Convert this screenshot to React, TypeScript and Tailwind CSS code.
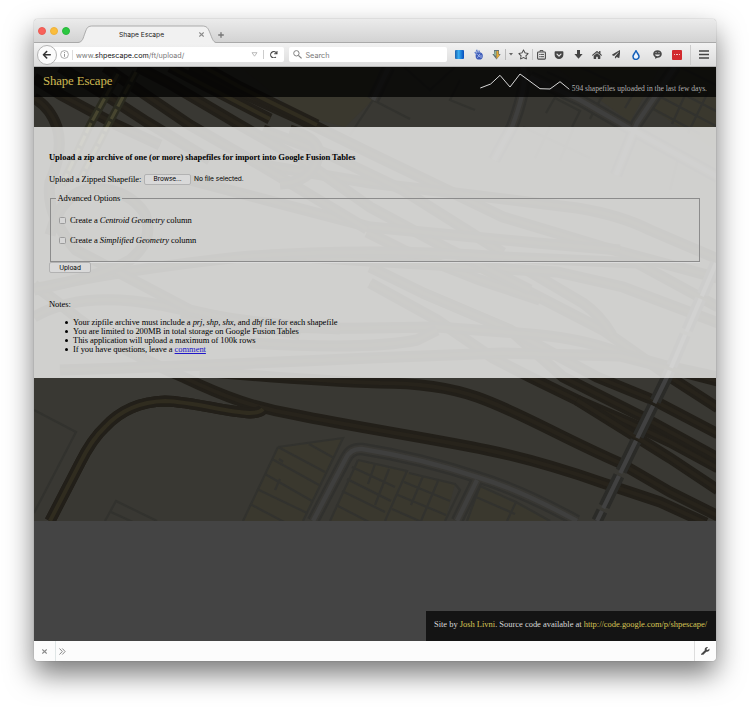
import React from "react";
import { FaHome, FaWrench, FaGetPocket, FaRegStar, FaPaperPlane, FaArrowLeft, FaRedo } from "react-icons/fa";
import { Plus } from "lucide-react";

const RAILS = [
  "M50 521 L80 463 Q92 439 105 427 Q128 402 165 401 C195 402 225 412 250 413 Q260 413 263 409",
  "M34 285 Q55 300 80 320 Q120 350 185 378 C225 397 255 408 297 415 C350 426 440 440 487 450 C540 461 580 475 603 483 L660 502 L706 523",
  "M200 371 Q313 381 380 383 Q437 383 477 397 C520 412 560 437 620 463 L670 492 L718 516",
  "M370 283 L437 320 L493 358 L530 377 L577 400 L630 423 L670 442 L718 468",
  "M577 400 L630 433 L670 458 L718 490",
  "M370 267 L423 293 L510 330 L563 377 L643 417 L718 458",
  "M423 293 L510 330 L597 377 L653 400 L718 434",
  "M477 265 L603 330 L670 377 L718 408",
  "M527 270 L583 303 Q600 315 612 335",
  "M180 320 Q280 330 370 328 L437 327 L517 333 Q580 337 620 353 L663 365 L718 377",
  "M60 370 Q220 365 370 358 L503 353 L620 356 L718 381",
  "M250 343 Q370 350 417 340 L437 330",
  "M367 232 L403 250 L480 280 L540 300",
  "M270 255 L403 263 L557 272 L623 287 L718 323",
  "M503 257 L637 263 L718 307",
  "M190 67 L240 92 L317 127 L370 153 L447 190 L503 217 L603 247 L718 278",
  "M263 165 L370 183 L447 192 L577 208 Q620 215 650 230 L718 259",
  "M138 67 L167 82 L240 125 L310 165 L370 207 L450 250 L530 290",
  "M263 130 L330 155 L403 190 L503 253",
  "M190 180 L370 227 L537 243 L620 250",
  "M34 289 Q120 270 240 257 Q370 247 503 257",
  "M34 317 Q80 290 160 305 Q250 325 340 329",
  "M34 98 Q50 107 57 127 Q64 150 50 182 Q45 215 76 250 L190 310 L300 335",
  "M105 67 L131 85 L190 125 L260 165 L367 229",
  "M60 67 L110 98 L147 122 L210 160",
  "M34 78 L61 95 L117 125 L160 145",
  "M50 235 Q62 190 95 188 Q130 190 145 214 Q155 240 130 260 Q105 275 34 290",
  "M290 130 Q325 140 317 160 Q310 182 280 184",
];

const GILDED = ["M204 67 L240 87 L317 125", "M170 67 L204 85 L270 119", "M50 521 L80 463 Q92 439 105 427 Q128 402 165 401 C195 402 225 412 250 413 Q260 413 263 409"];
const DASHED = ["M118 74 L90 125 L62 185", "M136 72 L106 129 L80 180"];
const BRIDGE = "M716 263 L667 377 L597 521";
const STREETS = [
  "M313 521 L346 458 Q351 448 362 449 Q420 458 480 478 Q520 490 577 521",
  "M477 480 L457 521",
  "M523 67 Q528 85 512 127 L494 160",
  "M530 77 L580 100 L627 127 L718 177",
  "M675 67 L637 123 L616 175",
  "M389 67 L373 100",
];
const PARCELS = [
  "M34 410 L76 432 L34 513",
  "M105 521 L116 501 L157 521 M111 512 L135 523",
  "M278 447 L343 438 L303 521 M278 447 L243 521",
  "M278 447 L325 472 M309 444 L334 458 M272 459 L319 485 M265 474 L312 501 M257 489 L307 513 M250 504 L286 523 M279 459 L283 462 M280 479 L275 490",
  "M358 460 L407 471 L385 521 M358 460 L330 521 M352 467 L395 487 M347 479 L391 501 M342 491 L385 512 M336 505 L369 522 M375 464 L368 484 M389 469 L375 505",
  "M409 473 L455 484 L460 490 L445 521 M404 482 L450 501 M398 495 L446 515 M392 509 L424 523 M423 476 L411 505 M438 481 L421 521",
  "M480 486 L516 502 L550 521 M480 486 L467 521 M476 497 L515 514 M516 502 L507 521",
  "M547 72 L565 80 L546 113 M565 80 L603 98 M555 98 L580 111 L572 127 M580 67 L610 81 L590 119 M610 81 L635 91 L625 108",
  "M660 82 L718 112 M653 93 L718 127 M646 105 L700 134 M680 67 L718 86 M690 84 L672 124 M708 92 L688 133",
  "M404 67 L430 90 L455 67 M460 80 L450 100 L475 110 M373 100 L410 119 M373 100 L350 135",
  "M523 127 L590 158 M550 127 L535 158 M574 127 L560 160 M650 145 L700 170 M680 150 L670 190",
];

function StreetMap() {
  return (
    <svg className="absolute left-0 top-0 h-[454px] w-[682px]" viewBox="34 67 682 454" fill="none">
      <rect x="34" y="67" width="682" height="454" fill="#393833" />
      <path d="M278 447 L343 438 L303 521 L243 521Z M358 460 L455 484 L445 521 L330 521Z M480 486 L550 521 L467 521Z M555 67 L660 67 L630 122Z M680 67 L716 67 L716 150 L645 105Z M373 100 L345 127 L300 115 L240 67 L380 67Z" fill="#3a382e" />
      {PARCELS.map((d) => <path key={d} d={d} stroke="#32322e" strokeWidth="2.2" />)}
      {STREETS.map((d) => <path key={d} d={d} stroke="#31312e" strokeWidth="12.5" />)}
      {STREETS.map((d) => <path key={d} d={d} stroke="#383733" strokeWidth="8" />)}
      {STREETS.map((d) => <path key={d} d={d} stroke="#3f3f3e" strokeWidth="4.5" />)}
      {RAILS.map((d) => (
        <g key={d}>
          <path d={d} stroke="#221f19" strokeWidth="11" />
          <path d={d} stroke="#27231b" strokeWidth="4" />
        </g>
      ))}
      {GILDED.map((d) => (
        <g key={d}>
          <path d={d} stroke="#221f19" strokeWidth="11" />
          <path d={d} stroke="#302c1f" strokeWidth="4" />
        </g>
      ))}
      {DASHED.map((d) => <path key={d} d={d} stroke="#2b2b20" strokeWidth="8" />)}
      {DASHED.map((d) => <path key={d} d={d} stroke="#47452f" strokeWidth="3.2" strokeDasharray="11 3" />)}
      <path d={BRIDGE} stroke="#2b2b28" strokeWidth="11.5" strokeDasharray="34 5" />
      <path d={BRIDGE} stroke="#414141" strokeWidth="4.3" strokeDasharray="36 3" />
    </svg>
  );
}

function Slot({ className, children }: { className: string; children?: React.ReactNode }) {
  return <div className={"flex h-full shrink-0 items-center justify-center text-[#454545] " + className}>{children}</div>;
}

function CloseMark() {
  return <svg width="5" height="5" viewBox="0 0 5 5" stroke="#8a8a8a" strokeWidth="1.1"><path d="M.3 .5 4.7 4.5M4.7 .5 .3 4.5" /></svg>;
}

function TabStrip() {
  return (
    <div className="flex h-6 shrink-0 rounded-t-[4px] border-b border-[#a9a9a9] bg-linear-to-b from-[#ebebeb] to-[#d3d3d3]">
      <div className="flex w-[44px] gap-[4px] pl-[4px] pt-[8px]">
        <i className="size-[8px] rounded-full border border-[#ea5b53] bg-[#f9615a]" />
        <i className="size-[8px] rounded-full border border-[#eeb23c] bg-[#fbbd3c]" />
        <i className="size-[8px] rounded-full border border-[#29b83c] bg-[#2bc840]" />
      </div>
      <div className="relative h-[24px] w-[138px]">
        <svg className="absolute inset-0" width="138" height="24" viewBox="0 0 138 24">
          <path d="M0 23.5 C5 23 5 19 7 14 C9 8 10 7 15 7 H124 C129 7 130 9 132 14 C134 19 135 23 138 23.5 V24 H0Z" fill="#f1f1f1" />
          <path d="M0 23.5 C5 23 5 19 7 14 C9 8 10 7 15 7 H124 C129 7 130 9 132 14 C134 19 135 23 138 23.5" fill="none" stroke="#9c9c9c" strokeWidth=".8" />
        </svg>
        <div className="relative flex h-full items-center pl-[41px] pt-[8px]">
          <span className="w-[80px] whitespace-nowrap font-['Inter',sans-serif] text-[6.7px] leading-[8px] text-[#222]">Shape Escape</span>
          <span className="pb-[2px]"><CloseMark /></span>
        </div>
      </div>
      <div className="pl-[1px] pt-[12px]"><Plus size={8} strokeWidth={4} color="#777" /></div>
    </div>
  );
}

function NavBar() {
  return (
    <div className="flex h-6 shrink-0 items-center border-b border-[#b5b5b5] bg-linear-to-b from-[#f2f2f2] to-[#dcdcdc] font-['Inter',sans-serif]">
      <div className="z-10 ml-[3px] flex size-[20px] items-center justify-center rounded-full border border-[#b3b3b3] bg-[#fbfbfb] text-[#333]">
        <FaArrowLeft size={9.5} />
      </div>
      <div className="-ml-[4px] flex h-[15px] w-[232px] items-center rounded-r-[2px] bg-white pl-[7px]">
        <svg width="9" height="9" viewBox="0 0 9 9" fill="none" stroke="#888" strokeWidth=".7"><circle cx="4.5" cy="4.5" r="3.9" /><path d="M4.5 3.8V6.8M4.5 2.1V3" strokeWidth=".9" /></svg>
        <i className="ml-[3px] mr-[3px] h-[10px] w-px bg-[#ddd]" />
        <span className="grow whitespace-nowrap pt-[1px] text-[7.15px] leading-[9px] text-[#777]">www.<span className="text-[#111]">shpescape.com</span>/ft/upload/</span>
        <svg width="7" height="5" viewBox="0 0 7 5" fill="none" stroke="#aaa" strokeWidth=".8"><path d="M1 .7H6L3.5 4.2Z" /></svg>
        <i className="ml-[5px] mr-[6px] h-[9px] w-px bg-[#ccc]" />
        <FaRedo size={7.5} color="#444" className="mr-[6.5px]" />
      </div>
      <div className="ml-[5px] mr-[3px] flex h-[15px] w-[158px] items-center gap-[3px] rounded-[2px] bg-white pl-[4px] text-[7.3px] leading-[9px] text-[#777]">
        <svg width="9" height="9" viewBox="0 0 9 9" fill="none" stroke="#808080"><circle cx="3.4" cy="3.3" r="2.7" strokeWidth="1" /><path d="M5.4 5.4 8.6 8.4" strokeWidth="1.3" /></svg>
        <span className="pt-[1px]">Search</span>
      </div>
      <Slot className="w-[19px]"><i className="h-[9px] w-[9px] rounded-[1px] bg-linear-to-r from-[#1b5fae] via-[#39adf1] via-40% to-[#0b4bbb]" /></Slot>
      <Slot className="w-[19px]">
        <svg width="10" height="11" viewBox="0 0 10 11" fill="none">
          <circle cx="5.2" cy="6.9" r="3.6" fill="#3d5bb8" /><path d="M2.5 .8 3.6 4M.8 3 3 5.4M5 1.5 5.4 4" stroke="#6480cb" strokeWidth="1.5" />
          <path d="M3.4 5.2 6 8M6 4.8 3.4 8.8M7 6V9" stroke="#b9c9f4" strokeWidth=".8" />
        </svg>
      </Slot>
      <Slot className="w-[17px]">
        <svg width="9" height="11" viewBox="0 0 9 11"><path d="M2 1H7V5H8.7L4.5 10.5.3 5H2Z" fill="#607075" /><path d="M4.5 2V10L8 6 6.4 5.6V2Z" fill="#e5aa34" /><path d="M2.8 2H4V7L2 5.7Z" fill="#8fb59a" /></svg>
      </Slot>
      <i className="h-[11px] w-px bg-[#bbb]" />
      <Slot className="w-[9px]"><svg width="4" height="3" viewBox="0 0 4 3"><path d="M0 0H4L2 2.6Z" fill="#666" /></svg></Slot>
      <Slot className="w-[17px]"><FaRegStar size={11} /></Slot>
      <i className="h-[11px] w-px bg-[#c5c5c5]" />
      <Slot className="w-[16px]">
        <svg width="9" height="10" viewBox="0 0 9 10" fill="none" stroke="#4a4a4a"><rect x=".6" y="2" width="7.8" height="7.1" rx=".8" strokeWidth="1.1" /><path d="M3 1.8V.6H6V1.8" strokeWidth="1" /><path d="M2 4.4H7M2 6.7H7" strokeWidth="1" /><path d="M3.1 3V8" stroke="#eee" strokeWidth=".5" /></svg>
      </Slot>
      <Slot className="w-[20px]"><FaGetPocket size={10} /></Slot>
      <Slot className="w-[18px]"><svg width="9" height="9" viewBox="0 0 9 9" fill="#454545"><path d="M3 0H6V4H8.6L4.5 8.7.4 4H3Z" /></svg></Slot>
      <Slot className="w-[20px]"><FaHome size={10} /></Slot>
      <Slot className="w-[18px]"><FaPaperPlane size={8.5} /></Slot>
      <Slot className="w-[22px]"><svg width="8" height="10" viewBox="0 0 8 10"><path d="M4 .8C5 3 7 4.6 7 6.4A3 3 0 0 1 1 6.4C1 4.6 3 3 4 .8Z" fill="#eef6ff" stroke="#1560b9" strokeWidth="1.5" /></svg></Slot>
      <Slot className="w-[21px]">
        <svg width="9" height="9" viewBox="0 0 9 9"><path d="M4.5.3C7 .3 8.8 2 8.8 4.1S7 7.8 4.6 7.8L2 8.8 2.2 7.2C1 6.6.2 5.4.2 4.1.2 2 2 .3 4.5.3Z" fill="#484848" /><path d="M2.6 2.6H3.5M5.5 2.6H6.4" stroke="#eee" strokeWidth=".9" /><path d="M1.9 4.5H7.1C6.4 6.8 2.6 6.8 1.9 4.5Z" fill="#e6e6e6" /></svg>
      </Slot>
      <Slot className="w-[18px]"><i className="flex size-[10px] items-center justify-center gap-[1px] rounded-[1px] bg-[#d2292d]"><b className="size-[1.5px] bg-[#f3c5c6]" /><b className="size-[1.5px] bg-[#f3c5c6]" /><b className="size-[1.5px] bg-[#f3c5c6]" /></i></Slot>
      <i className="ml-[4px] h-[20px] w-px bg-[#ccc]" />
      <Slot className="w-[25px]"><svg width="10" height="9" viewBox="0 0 10 9" stroke="#444" strokeWidth="1.4"><path d="M0 1H10M0 4.5H10M0 8H10" /></svg></Slot>
    </div>
  );
}

function MacButton({ children, className }: { children: React.ReactNode; className: string }) {
  return <button className={"flex h-[11px] items-center justify-center rounded-[2px] border border-[#b2b2b2] bg-[#d9d9d9] font-['Inter',sans-serif] text-[6.5px] leading-[8px] text-black " + className}>{children}</button>;
}

function Option({ kind }: { kind: string }) {
  return (
    <label className="flex h-[20px] items-center whitespace-nowrap">
      <i className="mr-[4px] size-[7px] rounded-[1.5px] border border-[#9c9c9c] bg-[#d6d6d6]" />
      <span>Create a <em>{kind}</em> column</span>
    </label>
  );
}

function UploadForm() {
  return (
    <main className="h-[251px] bg-[#f6f6f5]/80 pl-[15px] pr-[16px] pt-[25px] text-black">
      <h1 className="h-[11px] whitespace-nowrap text-[8.55px] font-bold leading-[11px] tracking-[-0.049px]">Upload a zip archive of one (or more) shapefiles for import into Google Fusion Tables</h1>
      <div className="mt-[10px] flex h-[12px] items-center whitespace-nowrap">
        <span className="w-[95px]">Upload a Zipped Shapefile:</span>
        <MacButton className="w-[47px]">Browse...</MacButton>
        <span className="ml-[3px] pt-[1px] font-['Inter',sans-serif] text-[6.6px]">No file selected.</span>
      </div>
      <div className="mt-[7px] flex h-[12px] items-center">
        <i className="ml-[1px] mr-[1.5px] mt-[1px] h-[6px] w-[6px] self-end border-l border-t border-[#8c8c8c]" />
        <span className="whitespace-nowrap">Advanced Options</span>
        <i className="ml-[1.5px] mt-[1px] h-[6px] grow self-end border-r border-t border-[#8c8c8c]" />
      </div>
      <div className="ml-[1px] h-[58px] border-x border-b border-[#8c8c8c] pl-[8px] pt-[6px] shadow-[0_1px_0_#dcdcdc]">
        <Option kind="Centroid Geometry" />
        <Option kind="Simplified Geometry" />
      </div>
      <MacButton className="w-[42px]">Upload</MacButton>
      <p className="mt-[27px] h-[9px] leading-[9px]">Notes:</p>
      <ul className="mt-[8.5px] whitespace-nowrap pl-[16px] leading-[9px]">
        <Note>Your zipfile archive must include a <em>prj</em>, <em>shp</em>, <em>shx</em>, and <em>dbf</em> file for each shapefile</Note>
        <Note>You are limited to 200MB in total storage on Google Fusion Tables</Note>
        <Note>This application will upload a maximum of 100k rows</Note>
        <Note>If you have questions, leave a <a className="text-[#2017c9] underline">comment</a></Note>
      </ul>
    </main>
  );
}

function Note({ children }: { children: React.ReactNode }) {
  return (
    <li className="flex h-[9px] items-center">
      <i className="mr-[5px] size-[3px] rounded-full bg-black" />
      <span>{children}</span>
    </li>
  );
}

export default function App() {
  return (
    <div className="h-[709px] w-[750px] overflow-hidden bg-white pl-[34px] pt-[19px]">
      <div className="flex h-[642px] w-[682px] flex-col rounded-[4px] shadow-[0_13px_28px_rgba(0,0,0,0.53),0_0_1px_rgba(0,0,0,0.5)]">
        <TabStrip />
        <NavBar />
        <div className="relative h-[574px] shrink-0 overflow-hidden bg-[#444] font-['Liberation_Serif',serif] text-[8.5px] tracking-[-0.05px]">
          <StreetMap />
          <div className="relative flex h-full flex-col">
            <header className="mb-[30px] flex h-[30px] shrink-0 justify-between bg-black/75 pl-[9px] pr-[9px]">
              <h2 className="whitespace-nowrap pt-[7px] text-[12.8px] leading-[15px] tracking-[-0.12px] text-[#cdb852]">Shape Escape</h2>
              <div className="flex">
                <svg width="92" height="30" viewBox="480 67 92 30" fill="none"><path d="M480.3 88 490.7 84 500 75.3 510 87 520 74 540 88.7 550 89 560 81.7 569.3 89.3" stroke="#d8d8d8" strokeWidth="1" /></svg>
                <span className="whitespace-nowrap pt-[17px] text-[7.6px] leading-[9px] tracking-[-0.015px] text-[#b0b0b0]">594 shapefiles uploaded in the last few days.</span>
              </div>
            </header>
            <UploadForm />
            <footer className="mt-auto flex h-[30px] w-[290px] justify-end self-end whitespace-nowrap bg-black/70 pr-[9px] pt-[8px] leading-[10px] tracking-[-0.025px] text-[#d8d8d8]">
              <p>Site by <a className="text-[#d6c455]">Josh Livni</a>. Source code available at <a className="text-[#d6c455]">http://code.google.com/p/shpescape/</a></p>
            </footer>
          </div>
        </div>
        <div className="flex h-[20px] shrink-0 items-center rounded-b-[4px] bg-[#fcfcfc]">
          <Slot className="w-[21px]"><CloseMark /></Slot>
          <i className="h-full w-px bg-[#e0e6e6]" />
          <Slot className="w-[12px]"><svg width="7" height="7" viewBox="0 0 7 7" fill="none" stroke="#888" strokeWidth="1"><path d="M.5 .5 3.3 3.5 .5 6.5M3.3 .5 6.1 3.5 3.3 6.5" /></svg></Slot>
          <i className="ml-auto h-full w-px bg-[#ddd]" />
          <Slot className="w-[21px]"><FaWrench size={8.5} /></Slot>
        </div>
      </div>
    </div>
  );
}
